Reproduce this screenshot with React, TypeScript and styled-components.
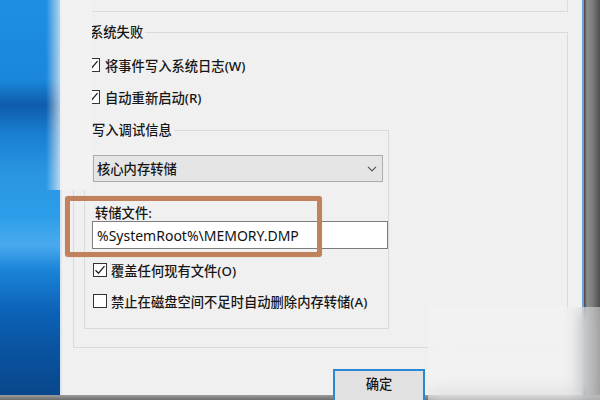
import React from "react";
import styled, { createGlobalStyle } from "styled-components";

const GlobalStyle = createGlobalStyle`
  html, body { margin: 0; padding: 0; background: #f0f0f0; }
  body { width: 600px; height: 400px; overflow: hidden; }
  * { box-sizing: border-box; }
`;

const FONT = `"Noto Sans", "Noto Sans CJK SC", sans-serif`;

const Screen = styled.div`
  position: relative;
  width: 600px;
  height: 400px;
  overflow: hidden;
  display: flex;
  flex-direction: column;
  font-family: ${FONT};
  font-weight: 500;
  color: #161616;
`;

const Main = styled.div`
  display: flex;
  height: 395px;
`;

const Desktop = styled.div`
  width: 60px;
  flex: none;
  background: linear-gradient(
    to bottom,
    #1d8fe1 0px,
    #1a87db 80px,
    #0e5cab 105px,
    #1a80d2 135px,
    #2a96e3 175px,
    #2b9de9 215px,
    #4aaaee 245px,
    #1a84d8 270px,
    #0c63b8 310px,
    #0a53a0 350px,
    #08478c 395px
  );
`;

const Dialog = styled.div`
  flex: 1;
  display: flex;
  flex-direction: column;
  background: #f0f0f0;
  border-left: 2px solid #d9e6f4;
  padding: 0 14px 0 11px;
`;

const PrevGroupEnd = styled.div`
  height: 12px;
  flex: none;
  border-right: 1px solid #dcdcdc;
  border-bottom: 1px solid #dcdcdc;
`;

const Group = styled.fieldset<{ $inner?: boolean }>`
  margin: ${(p) => (p.$inner ? "16px 17px 0 10px" : "12px 0 0 0")};
  padding: 0 0 18px 0;
  min-width: 0;
  border: 1px solid #dadada;
  display: flex;
  flex-direction: column;
  align-items: flex-start;
`;

const Legend = styled.legend<{ $indent: number }>`
  margin-left: ${(p) => p.$indent}px;
  padding: 0 2px;
  font-size: 13.3px;
  line-height: 16px;
`;

const CheckRow = styled.div<{ $top: number; $left: number; $gap: number }>`
  display: flex;
  align-items: center;
  gap: ${(p) => p.$gap}px;
  height: 18px;
  margin-top: ${(p) => p.$top}px;
  margin-left: ${(p) => p.$left}px;
  font-size: 13.3px;
  white-space: nowrap;
`;

const Box = styled.span`
  width: 14px;
  height: 14px;
  flex: none;
  border: 1px solid #333333;
  background: #ffffff;
  display: flex;
  align-items: center;
  justify-content: center;
`;

const Select = styled.div`
  margin: 17px 0 0 8px;
  width: 290px;
  height: 27px;
  flex: none;
  background: #e5e5e5;
  border: 1px solid #adadad;
  display: flex;
  align-items: center;
  justify-content: space-between;
  padding: 0 5px 0 3px;
  font-size: 13.3px;
`;

const FieldLabel = styled.div`
  margin: 23px 0 0 10px;
  font-size: 13.3px;
  line-height: 16px;
`;

const PathInput = styled.div`
  margin-left: 7px;
  width: 296px;
  height: 28px;
  flex: none;
  background: #ffffff;
  border: 1px solid #7d7d7d;
  display: flex;
  align-items: center;
  padding-left: 4px;
  font-size: 14px;
  font-weight: 400;
  font-family: "Noto Sans", sans-serif;
  color: #111;
`;

const OkButton = styled.div`
  position: relative;
  z-index: 2;
  margin: 21px 0 0 260px;
  width: 92px;
  height: 31px;
  flex: none;
  background: #e1e1e1;
  border: 2px solid #2c86d6;
  border-bottom: none;
  display: flex;
  justify-content: center;
  padding-top: 5px;
  font-size: 13.3px;
  line-height: 16px;
`;

const WindowEdge = styled.div`
  width: 18px;
  flex: none;
  border-left: 2px solid #6f9fd5;
  background: linear-gradient(
    to right,
    #444 0px,
    #8e8e8e 3px,
    #7a7a7a 9px,
    #4e4e4e 16px
  );
`;

const BottomBand = styled.div`
  height: 5px;
  background: linear-gradient(to bottom, #9b9b9b, #6d6d6d);
`;

const TopLeftFade = styled.div`
  position: absolute;
  left: 46px;
  top: 0;
  width: 46px;
  height: 190px;
  background: linear-gradient(
    to right,
    rgba(242, 242, 242, 0) 0px,
    rgba(242, 242, 242, 0.9) 18px,
    #f2f2f2 26px
  );
`;

const Highlight = styled.div`
  position: absolute;
  left: 65px;
  top: 196px;
  width: 257px;
  height: 61px;
  border: 5px solid #c2815d;
  border-radius: 3px;
  box-shadow: 0 0 1px rgba(194, 129, 93, 0.6);
`;

const Watermark = styled.div`
  position: absolute;
  left: 428px;
  top: 307px;
  width: 172px;
  height: 93px;
  backdrop-filter: blur(9px);
  background: rgba(244, 244, 244, 0.45);
`;

const Check = () => (
  <svg width="12" height="12" viewBox="0 0 12 12">
    <path d="M1.5 6.2 L4.5 9.2 L10.5 2.2" fill="none" stroke="#222" strokeWidth="1.3" />
  </svg>
);

const Chevron = () => (
  <svg width="10" height="6" viewBox="0 0 10 6">
    <path d="M1 0.8 L5 4.8 L9 0.8" fill="none" stroke="#555" strokeWidth="1.2" />
  </svg>
);

export default function App() {
  return (
    <>
      <GlobalStyle />
      <Screen>
        <Main>
          <Desktop />
          <Dialog>
            <PrevGroupEnd />
            <Group>
              <Legend $indent={14}>系统失败</Legend>
              <CheckRow $top={16} $left={12} $gap={5}>
                <Box>
                  <Check />
                </Box>
                将事件写入系统日志(W)
              </CheckRow>
              <CheckRow $top={14} $left={12} $gap={5}>
                <Box>
                  <Check />
                </Box>
                自动重新启动(R)
              </CheckRow>
              <Group $inner>
                <Legend $indent={5}>写入调试信息</Legend>
                <Select>
                  核心内存转储
                  <Chevron />
                </Select>
                <FieldLabel>转储文件:</FieldLabel>
                <PathInput>%SystemRoot%\MEMORY.DMP</PathInput>
                <CheckRow $top={12} $left={8} $gap={4}>
                  <Box>
                    <Check />
                  </Box>
                  覆盖任何现有文件(O)
                </CheckRow>
                <CheckRow $top={13} $left={8} $gap={4}>
                  <Box />
                  禁止在磁盘空间不足时自动删除内存转储(A)
                </CheckRow>
              </Group>
            </Group>
            <OkButton>确定</OkButton>
          </Dialog>
          <WindowEdge />
        </Main>
        <BottomBand />
        <TopLeftFade />
        <Highlight />
        <Watermark />
      </Screen>
    </>
  );
}
